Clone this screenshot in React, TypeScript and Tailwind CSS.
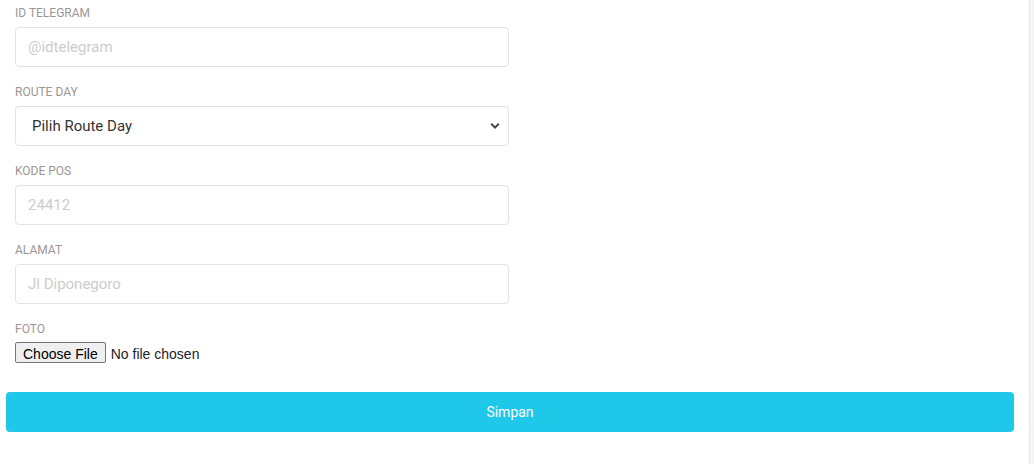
import React from "react";

const labelClass = "block text-[12px] leading-[18px] text-[#9b9696] uppercase mb-[5px]";
const inputClass =
  "w-full h-[40px] px-3 bg-white border border-[#e3e3e3] rounded-[4px] text-[15px] text-[#444] placeholder-[#cccccc] focus:outline-none";

const Field = ({ label, children }: { label: string; children: React.ReactNode }) => (
  <div className="mb-[16px]">
    <label className={labelClass}>{label}</label>
    {children}
  </div>
);

const App = () => {
  return (
    <div className="flex w-[1034px] h-[464px] bg-[#f5f5f5] font-['Roboto',sans-serif]">
      <div className="flex-1 bg-white border-r border-[#e6e6e6] pt-[4px] pl-[6px]">
        <div className="w-[494px] ml-[9px]">
          <Field label="ID Telegram">
            <input type="text" className={inputClass} placeholder="@idtelegram" />
          </Field>

          <Field label="Route Day">
            <div className="relative">
              <select
                className="w-full h-[40px] pl-[16px] pr-8 bg-white border border-[#e3e3e3] rounded-[4px] text-[15px] text-[#333] appearance-none focus:outline-none"
                defaultValue=""
              >
                <option value="">Pilih Route Day</option>
                <option value="senin">Senin</option>
                <option value="selasa">Selasa</option>
              </select>
              <svg
                className="absolute right-[9px] top-[16px] pointer-events-none"
                width="10"
                height="8"
                viewBox="0 0 10 8"
              >
                <path d="M1.2 1.8 L5 5.6 L8.8 1.8" fill="none" stroke="#444" strokeWidth="2" />
              </svg>
            </div>
          </Field>

          <Field label="Kode Pos">
            <input type="text" className={inputClass} placeholder="24412" />
          </Field>

          <Field label="Alamat">
            <input type="text" className={inputClass} placeholder="Jl Diponegoro" />
          </Field>

          <div>
            <label className={labelClass + " !mb-[4px]"}>Foto</label>
            <input
              type="file"
              className="text-[14px] leading-[22px] text-[#222] font-['Liberation_Sans',Arial,sans-serif] file:mr-[5px] file:px-[7px] file:py-0 file:h-[21px] file:bg-[#efefef] file:border file:border-solid file:border-[#767676] file:rounded-[2px] file:text-black file:font-['Liberation_Sans',Arial,sans-serif]"
            />
          </div>
        </div>

        <button
          type="submit"
          className="mt-[26px] w-[1008px] h-[40px] bg-[#1fc7e9] rounded-[4px] text-white text-[14px]"
        >
          Simpan
        </button>
      </div>
      <div className="w-[4px]" />
    </div>
  );
};

export default App;
